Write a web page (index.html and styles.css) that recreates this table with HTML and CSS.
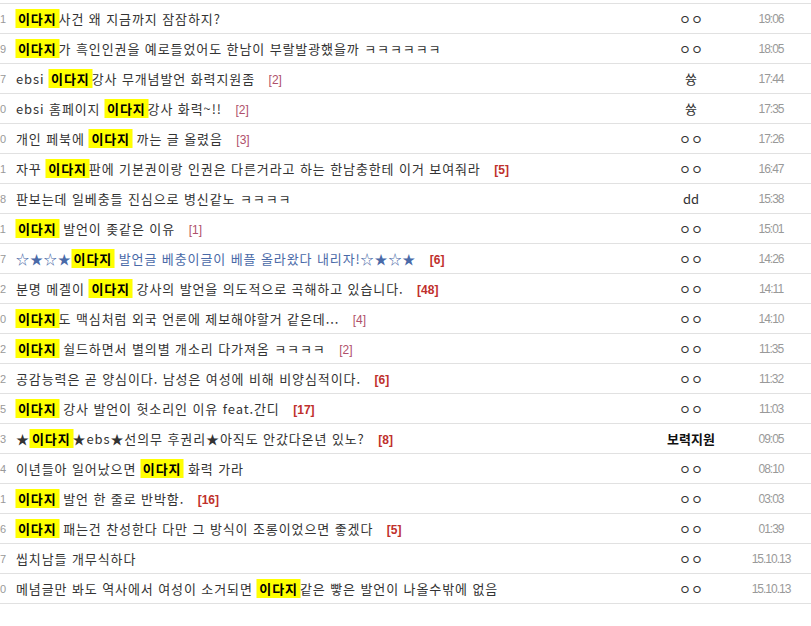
FILE: index.html
```html
<!DOCTYPE html>
<html lang="ko">
<head>
  <meta charset="UTF-8">
  <title>게시판 목록</title>
  <link rel="stylesheet" href="styles.css">
</head>
<body>
  <div class="board">
    <ul class="list">
      <li class="row"><span class="num">48751</span><span class="title"><em class="hl">이다지</em>사건 왜 지금까지 잠잠하지?</span><span class="writer">ㅇㅇ</span><span class="date">19:06</span></li>
      <li class="row"><span class="num">48749</span><span class="title"><em class="hl">이다지</em>가 흑인인권을 예로들었어도 한남이 부랄발광했을까 ㅋㅋㅋㅋㅋㅋ</span><span class="writer">ㅇㅇ</span><span class="date">18:05</span></li>
      <li class="row"><span class="num">48747</span><span class="title">ebsi <em class="hl">이다지</em>강사 무개념발언 화력지원좀 <b class="cmt">[2]</b></span><span class="writer">쓩</span><span class="date">17:44</span></li>
      <li class="row"><span class="num">48740</span><span class="title">ebsi 홈페이지 <em class="hl">이다지</em>강사 화력~!! <b class="cmt">[2]</b></span><span class="writer">쓩</span><span class="date">17:35</span></li>
      <li class="row"><span class="num">48730</span><span class="title">개인 페북에 <em class="hl">이다지</em> 까는 글 올렸음 <b class="cmt">[3]</b></span><span class="writer">ㅇㅇ</span><span class="date">17:26</span></li>
      <li class="row"><span class="num">48721</span><span class="title">자꾸 <em class="hl">이다지</em>판에 기본권이랑 인권은 다른거라고 하는 한남충한테 이거 보여줘라 <b class="cmt hot">[5]</b></span><span class="writer">ㅇㅇ</span><span class="date">16:47</span></li>
      <li class="row"><span class="num">48718</span><span class="title">판보는데 일베충들 진심으로 병신같노 ㅋㅋㅋㅋ</span><span class="writer">dd</span><span class="date">15:38</span></li>
      <li class="row"><span class="num">48711</span><span class="title"><em class="hl">이다지</em> 발언이 좆같은 이유 <b class="cmt">[1]</b></span><span class="writer">ㅇㅇ</span><span class="date">15:01</span></li>
      <li class="row"><span class="num">48707</span><span class="title blue">☆★☆★<em class="hl">이다지</em> 발언글 베충이글이 베플 올라왔다 내리자!☆★☆★ <b class="cmt hot">[6]</b></span><span class="writer">ㅇㅇ</span><span class="date">14:26</span></li>
      <li class="row"><span class="num">48702</span><span class="title">분명 메겔이 <em class="hl">이다지</em> 강사의 발언을 의도적으로 곡해하고 있습니다. <b class="cmt hot">[48]</b></span><span class="writer">ㅇㅇ</span><span class="date">14:11</span></li>
      <li class="row"><span class="num">48700</span><span class="title"><em class="hl">이다지</em>도 맥심처럼 외국 언론에 제보해야할거 같은데... <b class="cmt">[4]</b></span><span class="writer">ㅇㅇ</span><span class="date">14:10</span></li>
      <li class="row"><span class="num">48692</span><span class="title"><em class="hl">이다지</em> 쉴드하면서 별의별 개소리 다가져옴 ㅋㅋㅋㅋ <b class="cmt">[2]</b></span><span class="writer">ㅇㅇ</span><span class="date">11:35</span></li>
      <li class="row"><span class="num">48682</span><span class="title">공감능력은 곧 양심이다. 남성은 여성에 비해 비양심적이다. <b class="cmt hot">[6]</b></span><span class="writer">ㅇㅇ</span><span class="date">11:32</span></li>
      <li class="row"><span class="num">48675</span><span class="title"><em class="hl">이다지</em> 강사 발언이 헛소리인 이유 feat.간디 <b class="cmt hot">[17]</b></span><span class="writer">ㅇㅇ</span><span class="date">11:03</span></li>
      <li class="row"><span class="num">48663</span><span class="title">★<em class="hl">이다지</em>★ebs★선의무 후권리★아직도 안갔다온년 있노? <b class="cmt hot">[8]</b></span><span class="writer strong">보력지원</span><span class="date">09:05</span></li>
      <li class="row"><span class="num">48654</span><span class="title">이년들아 일어났으면 <em class="hl">이다지</em> 화력 가라</span><span class="writer">ㅇㅇ</span><span class="date">08:10</span></li>
      <li class="row"><span class="num">48641</span><span class="title"><em class="hl">이다지</em> 발언 한 줄로 반박함. <b class="cmt hot">[16]</b></span><span class="writer">ㅇㅇ</span><span class="date">03:03</span></li>
      <li class="row"><span class="num">48636</span><span class="title"><em class="hl">이다지</em> 패는건 찬성한다 다만 그 방식이 조롱이었으면 좋겠다 <b class="cmt hot">[5]</b></span><span class="writer">ㅇㅇ</span><span class="date">01:39</span></li>
      <li class="row"><span class="num">48627</span><span class="title">씹치남들 개무식하다</span><span class="writer">ㅇㅇ</span><span class="date">15.10.13</span></li>
      <li class="row"><span class="num">48620</span><span class="title">메념글만 봐도 역사에서 여성이 소거되면 <em class="hl">이다지</em>같은 빻은 발언이 나올수밖에 없음</span><span class="writer">ㅇㅇ</span><span class="date">15.10.13</span></li>
    </ul>
  </div>
</body>
</html>
```

FILE: styles.css
```css
* {
  margin: 0;
  padding: 0;
  box-sizing: border-box;
}

body {
  background-color: #fff;
  font-family: "Noto Sans CJK KR", "Noto Sans", sans-serif;
  font-size: 13px;
  color: #333;
}

.board {
  width: 811px;
  overflow: hidden;
}

.list {
  list-style: none;
  margin: 3px -20px 0 -34px;
  border-top: 1px solid #e1e1e1;
}

.row {
  display: grid;
  grid-template-columns: 40px 1fr 98px 62px;
  align-items: center;
  height: 30px;
  padding-right: 29px;
  border-bottom: 1px solid #e1e1e1;
}

.num {
  text-align: right;
  font-family: "Liberation Sans", sans-serif;
  font-size: 11px;
  color: #999;
}

.title {
  padding-left: 10px;
  white-space: nowrap;
  overflow: hidden;
  letter-spacing: 0.9px;
  color: #333;
}

.title.blue {
  color: #4a6aa8;
}

.hl {
  font-style: normal;
  font-weight: bold;
  color: #000;
  background-color: #ffff00;
  box-shadow: 0 0 0 1px #fdfd80;
  padding: 2px 2px;
}

.cmt {
  margin-left: 9px;
  font-family: "Liberation Sans", sans-serif;
  font-weight: normal;
  font-size: 12px;
  letter-spacing: 0;
  color: #b0506a;
}

.cmt.hot {
  font-weight: bold;
  color: #c0302c;
}

.writer {
  text-align: center;
  color: #333;
}

.writer.strong {
  font-weight: bold;
  color: #111;
}

.date {
  text-align: center;
  font-family: "Liberation Sans", sans-serif;
  font-size: 12px;
  letter-spacing: -1px;
  color: #999;
}
```
